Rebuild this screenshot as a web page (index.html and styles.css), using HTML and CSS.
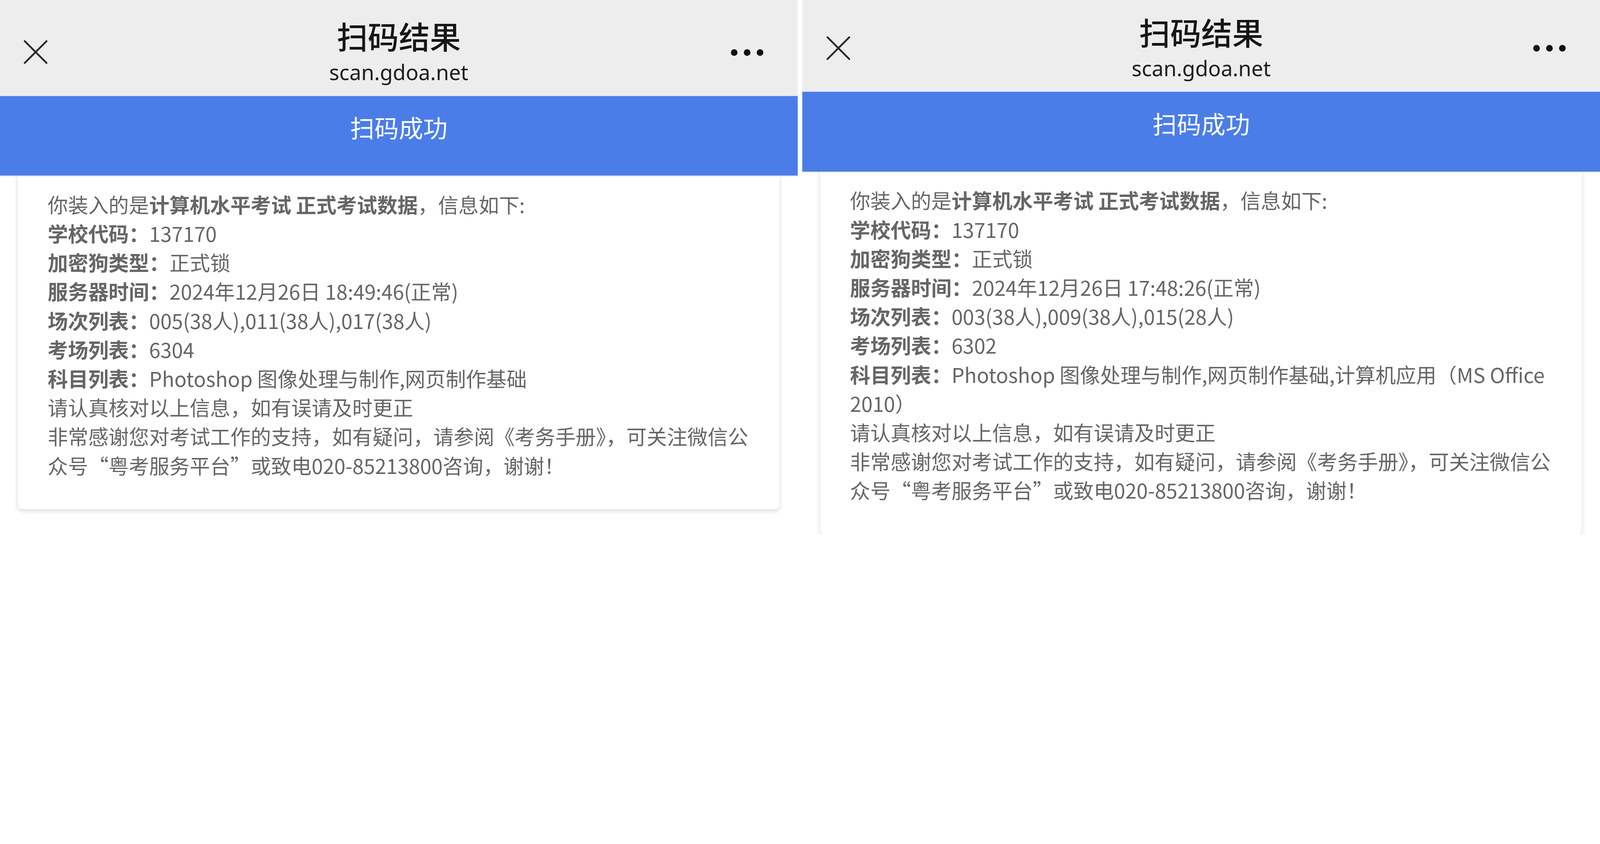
FILE: index.html
```html
<!DOCTYPE html>
<html lang="zh-CN">
    <head>
        <meta charset="utf-8">
        <title>扫码结果</title>
        <meta name="viewport" content="width=device-width, initial-scale=1">
        <link rel="stylesheet" href="styles.css">
    </head>
    <body>
        <main class="shots">
            <!-- First scan -->
            <section class="phone">
                <header class="nav-bar">
                    <span class="nav-close">
                        <svg viewBox="0 0 66 66"><path d="M3.5 3.5 62.5 62.5M62.5 3.5 3.5 62.5" stroke="#2b2b2b" stroke-width="5" stroke-linecap="round" fill="none"/></svg>
                    </span>
                    <div class="nav-title">
                        <h1 class="nav-title-main">扫码结果</h1>
                        <p class="nav-title-url">scan.gdoa.net</p>
                    </div>
                    <span class="nav-more">
                        <svg viewBox="0 0 88 20"><circle cx="9" cy="10" r="9"/><circle cx="44" cy="10" r="9"/><circle cx="79" cy="10" r="9"/></svg>
                    </span>
                </header>
                <div class="banner">扫码成功</div>
                <article class="result">
                    <p>你装入的是<b>计算机水平考试 正式考试数据</b>，信息如下:</p>
                    <p><b>学校代码：</b>137170</p>
                    <p><b>加密狗类型：</b>正式锁</p>
                    <p><b>服务器时间：</b>2024年12月26日 18:49:46(正常)</p>
                    <p><b>场次列表：</b>005(38人),011(38人),017(38人)</p>
                    <p><b>考场列表：</b>6304</p>
                    <p><b>科目列表：</b>Photoshop 图像处理与制作,网页制作基础</p>
                    <p>请认真核对以上信息，如有误请及时更正</p>
                    <p>非常感谢您对考试工作的支持，如有疑问，请参阅《考务手册》，可关注微信公众号“粤考服务平台”或致电020-85213800咨询，谢谢！</p>
                </article>
            </section>

            <!-- Second scan, screenshot cropped a little higher -->
            <section class="phone phone--cropped">
                <header class="nav-bar">
                    <span class="nav-close">
                        <svg viewBox="0 0 66 66"><path d="M3.5 3.5 62.5 62.5M62.5 3.5 3.5 62.5" stroke="#2b2b2b" stroke-width="5" stroke-linecap="round" fill="none"/></svg>
                    </span>
                    <div class="nav-title">
                        <h1 class="nav-title-main">扫码结果</h1>
                        <p class="nav-title-url">scan.gdoa.net</p>
                    </div>
                    <span class="nav-more">
                        <svg viewBox="0 0 88 20"><circle cx="9" cy="10" r="9"/><circle cx="44" cy="10" r="9"/><circle cx="79" cy="10" r="9"/></svg>
                    </span>
                </header>
                <div class="banner">扫码成功</div>
                <article class="result">
                    <p>你装入的是<b>计算机水平考试 正式考试数据</b>，信息如下:</p>
                    <p><b>学校代码：</b>137170</p>
                    <p><b>加密狗类型：</b>正式锁</p>
                    <p><b>服务器时间：</b>2024年12月26日 17:48:26(正常)</p>
                    <p><b>场次列表：</b>003(38人),009(38人),015(28人)</p>
                    <p><b>考场列表：</b>6302</p>
                    <p><b>科目列表：</b>Photoshop 图像处理与制作,网页制作基础,计算机应用（MS Office 2010）</p>
                    <p>请认真核对以上信息，如有误请及时更正</p>
                    <p>非常感谢您对考试工作的支持，如有疑问，请参阅《考务手册》，可关注微信公众号“粤考服务平台”或致电020-85213800咨询，谢谢！</p>
                </article>
            </section>
        </main>
    </body>
</html>
```

FILE: styles.css
```css
/* Reset */
*,
*::after,
*::before {
    margin: 0;
    padding: 0;
    box-sizing: border-box;
}

/* Base: 1rem = 100px of the 4333px wide capture */
html {
    font-size: calc(100vw / 43.33);
}
body {
    font-family: "Noto Sans CJK SC", "Noto Sans", sans-serif;
    background: #fff;
    color: #222;
    overflow: hidden;
}

.shots {
    display: flex;
    gap: 0.13rem;
}

.phone {
    flex: none;
    width: 21.6rem;
}

/* NAV */
.nav-bar {
    display: grid;
    grid-template-columns: 1fr auto 1fr;
    align-items: start;
    height: 2.59rem;
    padding-top: 0.47rem;
    background: #ededed;
}

.phone--cropped .nav-bar {
    height: 2.48rem;
    padding-top: 0.36rem;
}

.nav-close {
    display: flex;
    padding: 0.61rem 0 0 0.64rem;
}
.nav-close svg {
    width: 0.66rem;
    height: 0.66rem;
}

.nav-more {
    display: flex;
    justify-self: end;
    padding: 0.85rem 0.93rem 0 0;
    fill: #111;
}
.nav-more svg {
    width: 0.88rem;
    height: 0.2rem;
}

.nav-title {
    text-align: center;
}

.nav-title-main {
    font-size: 0.84rem;
    line-height: 1rem;
    font-weight: 500;
    color: #161616;
}

.nav-title-url {
    margin-top: 0.13rem;
    font-family: "Noto Sans", sans-serif;
    font-size: 0.57rem;
    line-height: 0.7rem;
    color: #1e1e1e;
}

/* Banner */
.banner {
    position: relative;
    z-index: 1;
    height: 2.16rem;
    padding-top: 0.51rem;
    border-top: 0.02rem solid #cbd9f6;
    background: #4a7de8;
    box-shadow: 0 0.02rem 0.03rem rgba(40, 70, 140, 0.35);
    color: #fff;
    font-size: 0.66rem;
    line-height: 0.66rem;
    text-align: center;
}

/* Result card */
.result {
    margin: 0 0.5rem 0 0.49rem;
    padding: 0.39rem 0.5rem 0.79rem 0.8rem;
    background: #fff;
    border-radius: 0 0 0.1rem 0.1rem;
    box-shadow: 0 0.04rem 0.14rem rgba(0, 0, 0, 0.16);
    color: #666;
    font-size: 0.55rem;
    line-height: 0.785rem;
}

.result b {
    font-weight: 700;
}
```
